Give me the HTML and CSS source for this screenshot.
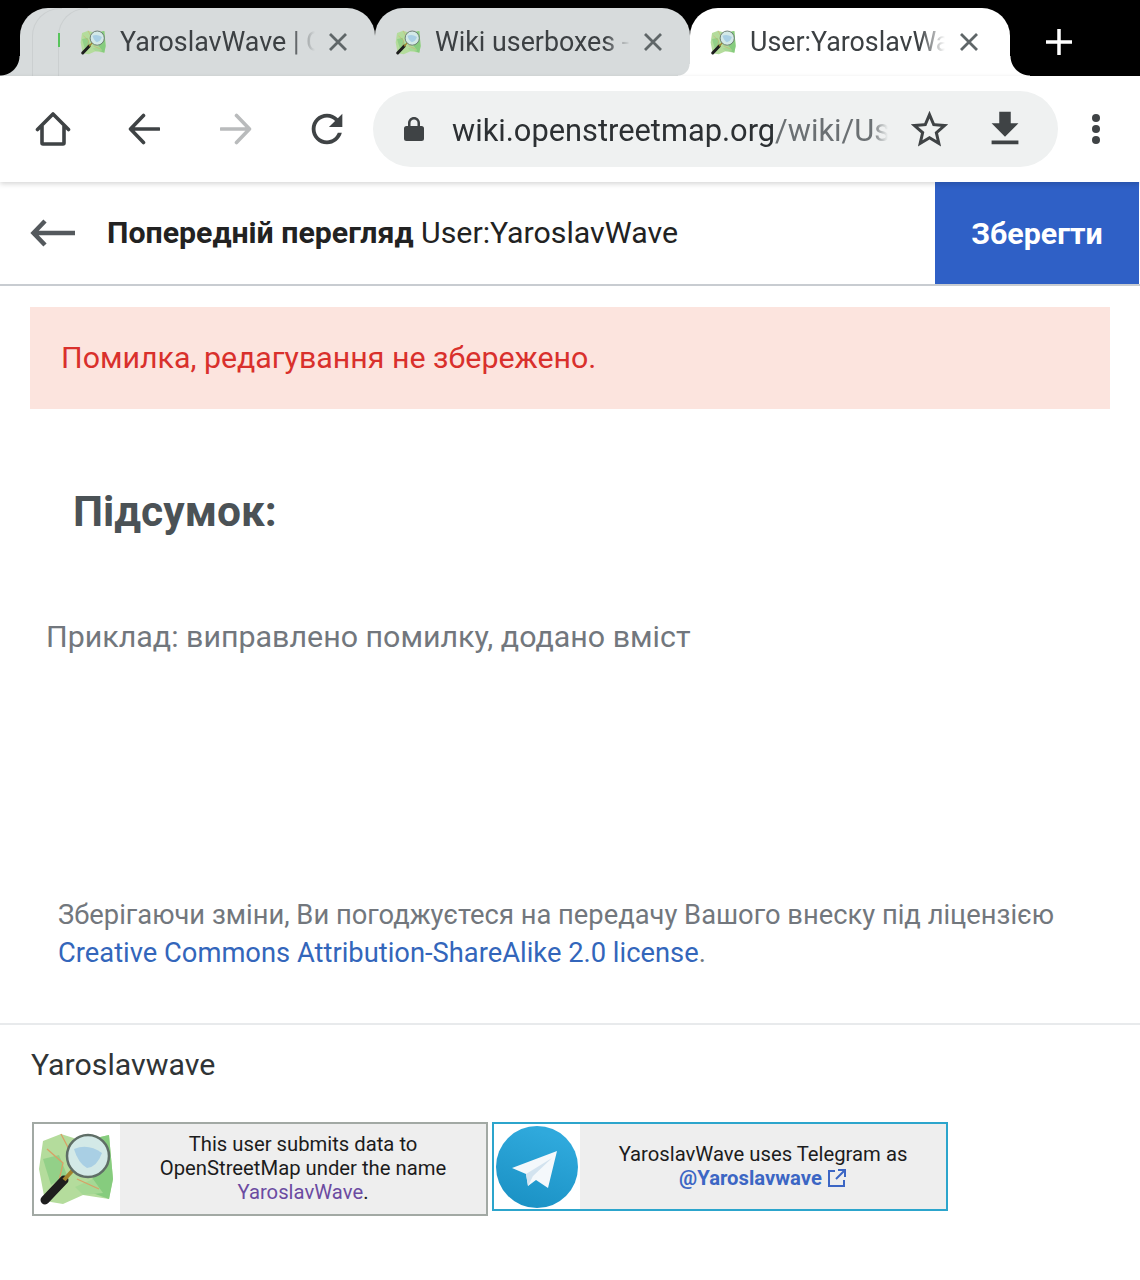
FILE: index.html
```html
<!DOCTYPE html>
<html lang="uk">
<head>
  <meta charset="UTF-8">
  <meta name="viewport" content="width=device-width, initial-scale=1.0">
  <title>User:YaroslavWave</title>
  <link rel="stylesheet" href="styles.css">
</head>
<body>
  <svg class="defs" width="0" height="0">
    <symbol id="osm" viewBox="0 0 80 80">
      <path d="M6 12 L24 5 L46 12 L72 6 L76 50 L72 70 L46 66 L26 75 L8 72 L2 40 Z" fill="#b4dc9c"/>
      <path d="M46 12 L72 6 L76 50 L72 70 L50 62 L60 40 Z" fill="#86cc7e"/>
      <path d="M6 30 L22 26 L30 46 L14 56 Z" fill="#93d088"/>
      <path d="M38 58 L56 50 L66 64 L46 66 Z" fill="#a5d894"/>
      <path d="M10 20 L26 34 L22 52 M24 5 L36 28 L52 20 M40 50 L62 60" fill="none" stroke="#d9a066" stroke-width="1.300"/>
      <path d="M8 71 L27 51" stroke="#1e1e1e" stroke-width="9" stroke-linecap="round"/>
      <path d="M27 51 L36 41" stroke="#a4832c" stroke-width="4"/>
      <circle cx="51" cy="27" r="21" fill="#d3e9e7" stroke="#5f6e66" stroke-width="2.500"/>
      <path d="M37 20 Q51 14 65 24 Q60 38 50 39 Q41 34 37 20Z" fill="#a9cfe4"/>
    </symbol>
  </svg>

  <div class="tabstrip">
    <div class="tab stack">
      <span class="stack-line one"></span>
      <span class="stack-line two"></span>
      <span class="stack-mark"></span>
      <svg class="favicon"><use href="#osm"/></svg>
      <span class="tab-title">YaroslavWave | O</span>
      <svg class="tab-close" viewBox="0 0 20 20"><path d="M2 2 L18 18 M18 2 L2 18"/></svg>
    </div>
    <div class="tab second">
      <svg class="favicon"><use href="#osm"/></svg>
      <span class="tab-title">Wiki userboxes -</span>
      <svg class="tab-close" viewBox="0 0 20 20"><path d="M2 2 L18 18 M18 2 L2 18"/></svg>
    </div>
    <div class="tab active">
      <svg class="favicon"><use href="#osm"/></svg>
      <span class="tab-title">User:YaroslavWa</span>
      <svg class="tab-close" viewBox="0 0 20 20"><path d="M2 2 L18 18 M18 2 L2 18"/></svg>
    </div>
    <div class="newtab">
      <svg viewBox="0 0 28 28" width="28" height="28"><path d="M14 1 V27 M1 14 H27"/></svg>
    </div>
  </div>

  <div class="toolbar">
    <div class="navbtn">
      <svg width="36" height="36" viewBox="0 0 36 36" class="line"><path d="M2.500 18.500 L18 3 L33.500 18.500 M7 15 V32 Q7 33 8 33 H28 Q29 33 29 32 V15"/></svg>
    </div>
    <div class="navbtn">
      <svg width="32" height="32" viewBox="0 0 32 32" class="line"><path d="M31 16 H3 M15.500 2.500 L2.500 16 L15.500 29.500"/></svg>
    </div>
    <div class="navbtn">
      <svg width="32" height="32" viewBox="0 0 32 32" class="line off"><path d="M1 16 H29 M16.500 2.500 L29.500 16 L16.500 29.500"/></svg>
    </div>
    <div class="navbtn">
      <svg width="46" height="46" viewBox="0 0 24 24" class="fill"><path d="M17.650 6.350C16.200 4.900 14.210 4 12 4c-4.420 0-7.990 3.580-7.990 8s3.570 8 7.990 8c3.730 0 6.840-2.550 7.730-6h-2.080c-.82 2.330-3.040 4-5.650 4-3.310 0-6-2.690-6-6s2.690-6 6-6c1.660 0 3.140.69 4.220 1.780L13 11h7V4l-2.350 2.350z"/></svg>
    </div>
    <div class="omnibox">
      <svg class="lock fill" width="20" height="24" viewBox="0 0 20 24"><path d="M2.500 9 H4 V6 C4 2.700 6.700 0 10 0 S16 2.700 16 6 V9 H17.500 Q20 9 20 11.500 V21.500 Q20 24 17.500 24 H2.500 Q0 24 0 21.500 V11.500 Q0 9 2.500 9 Z M6.500 9 H13.500 V6 C13.500 4 12 2.500 10 2.500 S6.500 4 6.500 6 Z"/></svg>
      <div class="url"><span class="host">wiki.openstreetmap.org</span>/wiki/Use</div>
      <svg class="star fill" width="45" height="45" viewBox="0 0 24 24"><path d="M22 9.240l-7.190-.62L12 2 9.190 8.630 2 9.240l5.460 4.730L5.820 21 12 17.270 18.180 21l-1.630-7.030L22 9.240zM12 15.400l-3.760 2.270 1-4.280-3.320-2.880 4.380-.38L12 6.100l1.710 4.040 4.380.38-3.320 2.880 1 4.280L12 15.400z"/></svg>
      <svg class="download fill" width="46" height="46" viewBox="0 0 24 24"><path d="M19 9h-4V3H9v6H5l7 7 7-7zM5 18v2h14v-2H5z"/></svg>
    </div>
    <div class="menu"><span></span><span></span><span></span></div>
  </div>

  <div class="editor-head">
    <svg class="back" width="46" height="30" viewBox="0 0 46 30"><path d="M45 15 H4 M15 3 L3.500 15 L15 27"/></svg>
    <div class="head-title"><strong>Попередній перегляд</strong> User:YaroslavWave</div>
    <button class="save">Зберегти</button>
  </div>

  <div class="error">Помилка, редагування не збережено.</div>

  <h2 class="summary-head">Підсумок:</h2>
  <div class="summary-input">Приклад: виправлено помилку, додано вміст</div>

  <p class="license">Зберігаючи зміни, Ви погоджуєтеся на передачу Вашого внеску під ліцензією<br><a href="#">Creative Commons Attribution-ShareAlike 2.0 license</a>.</p>

  <div class="page-title">Yaroslavwave</div>

  <div class="userboxes">
    <div class="userbox osm">
      <div class="userbox-pic">
        <svg width="80" height="82"><use href="#osm"/></svg>
      </div>
      <div class="userbox-text">This user submits data to<br>OpenStreetMap under the name<br><a class="visited" href="#">YaroslavWave</a>.</div>
    </div>
    <div class="userbox tg">
      <div class="userbox-pic">
        <svg width="82" height="82" viewBox="0 0 82 82">
          <defs>
            <linearGradient id="tg" x1="0.65" y1="0.1" x2="0.35" y2="0.95">
              <stop offset="0" stop-color="#2fa9dc"/>
              <stop offset="1" stop-color="#1c93c6"/>
            </linearGradient>
          </defs>
          <circle cx="41" cy="41" r="41" fill="url(#tg)"/>
          <path d="M16 42 L61 25 L52 62 L40 54 L32 60 L30 48 Z" fill="#f4f8fb"/>
          <path d="M30 48 L56 32 L37 50 L32 60 Z" fill="#d3e3ef"/>
        </svg>
      </div>
      <div class="userbox-text">YaroslavWave uses Telegram as<br><a class="handle" href="#">@Yaroslavwave <svg width="20" height="20" viewBox="0 0 20 20"><path d="M8 3 H2 V18 H17 V12 M11 2 H18 V9 M18 2 L9 11"/></svg></a></div>
    </div>
  </div>
</body>
</html>
```

FILE: styles.css
```css
* {
  box-sizing: border-box;
}

body {
  margin: 0;
  width: 1140px;
  height: 1280px;
  overflow: hidden;
  background-color: #fff;
  color: #222;
  font-family: Roboto, "Noto Sans", sans-serif;
}

.defs {
  position: absolute;
}

/* tabs */
.tabstrip {
  display: flex;
  height: 76px;
  padding: 8px 0 0 20px;
  background-color: #000;
}

.tab {
  position: relative;
  display: flex;
  align-items: center;
  height: 68px;
  background-color: #d7dbdc;
  border-radius: 28px 28px 0 0;
}

.tab.stack {
  width: 355px;
  padding-left: 60px;
}

.tab.second {
  width: 315px;
  padding-left: 20px;
}

.tab.active {
  width: 320px;
  padding-left: 20px;
  background-color: #fff;
}

/* little flares at the bottom of the strip */
.tab.stack::before,
.tab.active::after,
.tab.active::before {
  content: "";
  position: absolute;
  bottom: 0;
}

.tab.stack::before {
  left: -20px;
  width: 20px;
  height: 20px;
  background: radial-gradient(circle at 0 0, #000 19px, #d7dbdc 20px);
}

.tab.active::after {
  right: -20px;
  width: 20px;
  height: 20px;
  background: radial-gradient(circle at 100% 0, #000 19px, #fff 20px);
}

.tab.active::before {
  left: -12px;
  width: 12px;
  height: 12px;
  background: radial-gradient(circle at 0 0, #d7dbdc 11px, #fff 12px);
}

.stack-line {
  position: absolute;
  top: 0;
  bottom: 0;
  border-left: 1px solid #cbcfd0;
  border-top-left-radius: 28px;
}

.stack-line.one {
  left: 12px;
  width: 30px;
  border-top: 1px solid #cbcfd0;
}

.stack-line.two {
  left: 38px;
  width: 30px;
  border-top: 1px solid #cbcfd0;
}

.stack-mark {
  position: absolute;
  left: 38px;
  top: 25px;
  width: 2px;
  height: 14px;
  background-color: #58c45c;
}

.favicon {
  flex: none;
  width: 27px;
  height: 27px;
  margin-right: 13px;
}

.tab-title {
  flex: none;
  width: 197px;
  overflow: hidden;
  white-space: nowrap;
  font-size: 26.800px;
  color: #3c4043;
  -webkit-mask-image: linear-gradient(to right, #000 170px, transparent 195px);
  mask-image: linear-gradient(to right, #000 170px, transparent 195px);
}

.tab.active .tab-title {
  width: 198px;
}

.tab-close {
  flex: none;
  width: 20px;
  height: 20px;
  margin-left: 11px;
  fill: none;
  stroke: #5f6668;
  stroke-width: 2.800;
}

.newtab {
  display: flex;
  align-items: center;
  justify-content: center;
  margin-left: 35px;
  width: 28px;
  height: 68px;
}

.newtab svg {
  fill: none;
  stroke: #fff;
  stroke-width: 3.500;
}

/* toolbar */
.toolbar {
  position: relative;
  display: flex;
  align-items: center;
  height: 106px;
  padding-left: 7px;
  background-color: #fff;
  box-shadow: 0 2px 5px rgba(0, 0, 0, 0.16);
}

.navbtn {
  display: flex;
  align-items: center;
  justify-content: center;
  width: 91.500px;
  height: 76px;
}

.line {
  fill: none;
  stroke: #3f4345;
  stroke-width: 3.600;
  stroke-linecap: round;
  stroke-linejoin: round;
}

.line.off {
  stroke: #b9bbbc;
}

.fill {
  fill: #3f4345;
}

.omnibox {
  display: flex;
  align-items: center;
  width: 685px;
  height: 76px;
  padding-left: 31px;
  background-color: #eff1f1;
  border-radius: 38px;
}

.lock {
  flex: none;
  margin-right: 28px;
}

.url {
  flex: none;
  width: 436px;
  padding-top: 2px;
  overflow: hidden;
  white-space: nowrap;
  font-size: 30.800px;
  color: #6b7073;
  -webkit-mask-image: linear-gradient(to right, #000 420px, transparent 436px);
  mask-image: linear-gradient(to right, #000 420px, transparent 436px);
}

.url .host {
  color: #2c3033;
}

.star {
  flex: none;
  margin-left: 19px;
}

.download {
  flex: none;
  margin-left: 30px;
}

.menu {
  display: flex;
  flex-direction: column;
  gap: 3px;
  margin-left: 34px;
}

.menu span {
  width: 8px;
  height: 8px;
  border-radius: 50%;
  background-color: #3f4345;
}

/* edit preview header */
.editor-head {
  display: flex;
  align-items: center;
  height: 104px;
  padding-left: 30px;
  border-bottom: 2px solid #c8ccd1;
}

.back {
  flex: none;
  margin-right: 31px;
  fill: none;
  stroke: #54595d;
  stroke-width: 4.500;
}

.head-title {
  flex: 1;
  padding-bottom: 2px;
  font-size: 30.300px;
  color: #222;
}

.head-title strong {
  font-weight: 700;
}

.save {
  width: 204px;
  height: 102px;
  margin-right: 1px;
  border: none;
  background-color: #2f60c6;
  color: #fff;
  font-family: inherit;
  font-size: 30.400px;
  font-weight: 700;
}

.error {
  margin: 21px 30px 0;
  height: 102px;
  padding: 33px 31px 0;
  background-color: #fce4de;
  color: #d9302c;
  font-size: 30.350px;
}

.summary-head {
  margin: 78px 0 0 73px;
  font-size: 42.500px;
  font-weight: 700;
  line-height: 50px;
  color: #4b5256;
}

.summary-input {
  margin: 80px 0 0 46px;
  font-size: 30.400px;
  line-height: 40px;
  color: #72777d;
}

.license {
  margin: 239px 0 0 58px;
  font-size: 27.330px;
  line-height: 38px;
  color: #72777d;
}

.license a {
  color: #3366bb;
  text-decoration: none;
}

.page-title {
  margin-top: 51px;
  padding: 22px 0 0 31px;
  border-top: 2px solid #e8eaec;
  font-size: 30.300px;
  line-height: 35px;
  color: #303436;
}

/* userboxes */
.userboxes {
  display: flex;
  align-items: flex-start;
  gap: 4px;
  margin: 40px 0 0 32px;
}

.userbox {
  display: flex;
  background-color: #eee;
}

.userbox.osm {
  width: 456px;
  height: 94px;
  border: 2px solid #a2a9a4;
}

.userbox.tg {
  width: 456px;
  height: 89px;
  border: 2px solid #2ca5cc;
}

.userbox-pic {
  display: flex;
  flex: none;
  align-items: center;
  justify-content: center;
  width: 86px;
  background-color: #fff;
}

.userbox-text {
  flex: 1;
  align-self: center;
  padding-bottom: 2px;
  text-align: center;
  font-size: 20.250px;
  line-height: 24px;
  color: #1c1c1c;
}

.visited {
  color: #6b4ba1;
  text-decoration: none;
}

.handle {
  color: #3c66c4;
  font-weight: 700;
  text-decoration: none;
}

.handle svg {
  vertical-align: -3px;
  fill: none;
  stroke: #3c66c4;
  stroke-width: 2;
}
```
